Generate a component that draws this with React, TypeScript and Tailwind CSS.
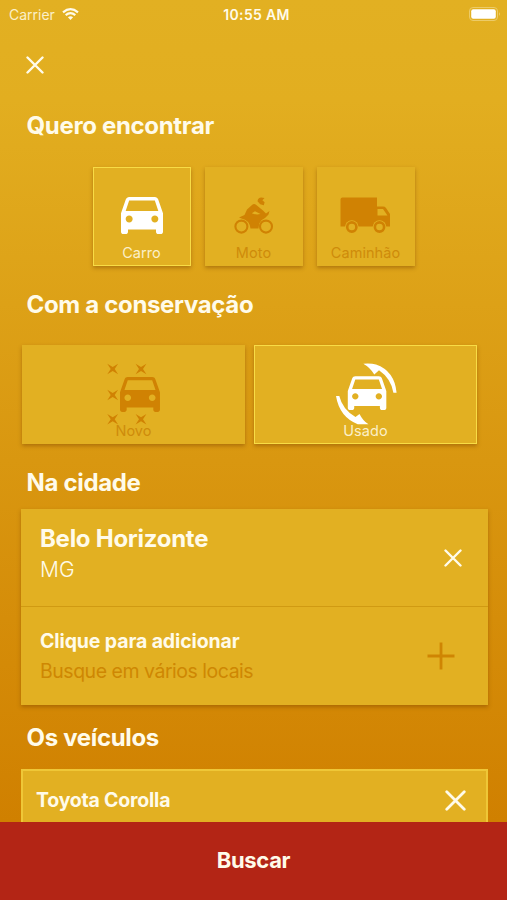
import type { ReactNode } from "react";
import clsx from "clsx";

const CAR_PATH =
  "M18.92 6.01C18.72 5.42 18.16 5 17.5 5h-11c-.66 0-1.21.42-1.42 1.01L3 12v8c0 .55.45 1 1 1h1c.55 0 1-.45 1-1v-1h12v1c0 .55.45 1 1 1h1c.55 0 1-.45 1-1v-8l-2.08-5.99zM6.5 16c-.83 0-1.5-.67-1.5-1.5S5.67 13 6.5 13s1.5.67 1.5 1.5S7.33 16 6.5 16zm11 0c-.83 0-1.5-.67-1.5-1.5s.67-1.5 1.5-1.5 1.5.67 1.5 1.5-.67 1.5-1.5 1.5zM5 11l1.5-4.5h11L19 11H5z";

function CarIcon() {
  return (
    <svg width="42" height="37" viewBox="3 5 18 16" preserveAspectRatio="none" fill="currentColor">
      <path d={CAR_PATH} />
    </svg>
  );
}

function MotoIcon() {
  return (
    <svg width="40" height="37" viewBox="0 0 40 37" fill="currentColor">
      <circle cx="7.4" cy="29.6" r="6" fill="none" stroke="currentColor" strokeWidth="2.1" />
      <circle cx="32" cy="29.6" r="6" fill="none" stroke="currentColor" strokeWidth="2.1" />
      <path d="M5 20.5 10.5 18 13 12.5 18 8Q20 6 22.3 8L29 13.5 32 16.5 35.5 14 34.5 17.5 31 21Q27 22.5 25.2 26.5L24.5 31.5H16.5Q15.5 23 7.5 21.5Z" />
      <path d="M17.8 16.2 21 14.2 26.5 17Q22 18.2 17.8 16.2Z" fill="#e2b022" />
      <path d="M23.5 4.2Q24 .8 27.2.6L30.5 1 28.4 3.2 30.6 5.3 29.8 8.2 26.2 7.2Z" />
    </svg>
  );
}

function TruckIcon() {
  return (
    <svg width="51" height="37" viewBox="0 0 51 37" fill="currentColor">
      <path d="M2.5.5H37v9h6q2 0 3 1.4L50 17v12.5H.5v-27q0-2 2-2z" />
      <path d="M37.5 12h5.5l4.5 6.5h-10z" fill="#e2b022" />
      <circle cx="11.8" cy="30" r="6.8" fill="#e2b022" />
      <circle cx="39.5" cy="30" r="6.8" fill="#e2b022" />
      <circle cx="11.8" cy="30" r="4.6" fill="none" stroke="currentColor" strokeWidth="2.6" />
      <circle cx="39.5" cy="30" r="4.6" fill="none" stroke="currentColor" strokeWidth="2.6" />
    </svg>
  );
}

function NewCarIcon() {
  const sparks = [
    [5.7, 6],
    [34, 6],
    [5.7, 32],
    [5.7, 56.3],
    [34, 56.3],
  ];
  return (
    <svg width="54" height="62" viewBox="0 0 54 62" fill="currentColor">
      {sparks.map(([x, y]) => (
        <path
          key={`${x}-${y}`}
          transform={`translate(${x} ${y})`}
          d="M-5.4-5.2 0-2 5.4-5.2 2 0 5.4 5.2 0 2-5.4 5.2-2 0Z"
        />
      ))}
      <path transform="translate(13 14) scale(2.22 2.18) translate(-3 -5)" d={CAR_PATH} />
    </svg>
  );
}

function UsedCarIcon() {
  return (
    <svg width="62" height="62" viewBox="0 0 62 62" fill="currentColor">
      <path d="M28.3.8Q36 .2 41 1.6 59.5 8 61.6 29.8H58.4Q56 15.5 44 7.3L39.3 11.5Q35 4.5 28.3.8Z" />
      <path d="M1 33H4.3Q7.5 46.5 20.5 54L24.5 51Q28 58 33.5 61.3L22.7 61.2Q4.5 54 1 33Z" />
      <path transform="translate(12.8 13.2) scale(2.14 2.12) translate(-3 -5)" d={CAR_PATH} />
    </svg>
  );
}

function CloseIcon({ size }: { size: number }) {
  return (
    <svg width={size} height={size} viewBox="0 0 18 18" fill="none" stroke="#fffbea" strokeWidth="2.4" strokeLinecap="round">
      <path d="M1.5 1.5 16.5 16.5M16.5 1.5 1.5 16.5" />
    </svg>
  );
}

type OptionProps = {
  label: string;
  icon: ReactNode;
  selected?: boolean;
  className?: string;
};

function Option({ label, icon, selected, className }: OptionProps) {
  return (
    <button
      className={clsx(
        "flex flex-col items-center justify-end bg-[#e2b022] pb-[3px] shadow-[0_2px_4px_rgba(120,65,0,0.45)]",
        selected ? "border border-[#f8dc45] text-white" : "border border-transparent text-[#d08203]",
        className,
      )}
    >
      {icon}
      <span className={clsx("text-[14.5px] leading-[18px] tracking-[0.05px]", selected ? "text-[#fbefc8]" : "text-[#ce8b0b]")}>
        {label}
      </span>
    </button>
  );
}

function Heading({ children }: { children: ReactNode }) {
  return <h2 className="pl-[26.5px] text-[24px] leading-[30px] font-bold tracking-[-0.33px]">{children}</h2>;
}

export default function App() {
  return (
    <div className="flex h-[900px] w-[507px] flex-col overflow-hidden bg-[linear-gradient(#e2b022_0px,#e2ae20_100px,#d08000_822px)] font-['Inter',sans-serif] text-[#fffbea]">
      <header className="grid h-7 shrink-0 grid-cols-3 items-center pr-[6px] pl-[9px] text-[14px]">
        <div className="flex items-center gap-[7px] text-[#fbefc8]">
          <span>Carrier</span>
          <svg width="17" height="12" viewBox="0 0 17 12" fill="none" stroke="#fffbea" strokeWidth="2.2">
            <path d="M1 4.3Q8.5-2 16 4.3M3.7 7.2Q8.5 3.2 13.3 7.2" />
            <path d="M5.9 9.3Q8.5 7.2 11.1 9.3L8.5 12Z" fill="#fffbea" stroke="none" />
          </svg>
        </div>
        <span className="pl-[3px] text-center font-semibold tracking-[0.3px]">10:55 AM</span>
        <svg className="justify-self-end" width="32" height="14" viewBox="0 0 32 14">
          <rect x=".5" y=".5" width="28" height="13" rx="3.5" fill="none" stroke="#eccb68" />
          <rect x="2.2" y="2.2" width="24.6" height="9.6" rx="2" fill="#fff" />
          <path d="M30 5Q31.6 7 30 9Z" fill="#f2d98a" />
        </svg>
      </header>

      <main className="h-[794px] shrink-0 overflow-hidden">
        <button className="mt-[28px] ml-[26px] block">
          <CloseIcon size={18} />
        </button>

        <div className="mt-[37px]">
          <Heading>Quero encontrar</Heading>
        </div>
        <div className="mt-[26px] flex justify-center gap-[14px]">
          <Option label="Carro" icon={<div className="mb-[10px]"><CarIcon /></div>} selected className="h-[99px] w-[98px]" />
          <Option label="Moto" icon={<div className="mb-[10px]"><MotoIcon /></div>} className="h-[99px] w-[98px]" />
          <Option label="Caminhão" icon={<div className="mb-[10px]"><TruckIcon /></div>} className="h-[99px] w-[98px]" />
        </div>

        <div className="mt-[24px]">
          <Heading>Com a conservação</Heading>
        </div>
        <div className="mt-[25px] flex gap-[9px] pl-[22px]">
          <Option label="Novo" icon={<div className="mb-[-3px]"><NewCarIcon /></div>} className="h-[99px] w-[223px]" />
          <Option label="Usado" icon={<div className="mb-[-3px]"><UsedCarIcon /></div>} selected className="h-[99px] w-[223px]" />
        </div>

        <div className="mt-[24px]">
          <Heading>Na cidade</Heading>
        </div>
        <div className="mt-[11px] ml-[21px] w-[467px] bg-[#e2b022] shadow-[0_2px_4px_rgba(120,65,0,0.45)]">
          <div className="flex h-[98px] items-center justify-between border-b border-[#d09a12] pr-[26px] pl-[19px]">
            <div className="pb-[8px]">
              <p className="text-[24px] leading-[32px] font-bold tracking-[-0.27px]">Belo Horizonte</p>
              <p className="text-[21px] leading-[30px] font-light">MG</p>
            </div>
            <CloseIcon size={18} />
          </div>
          <div className="flex h-[98px] items-center justify-between pr-[33px] pl-[19px]">
            <div>
              <p className="text-[19.5px] leading-[30px] font-bold tracking-[-0.12px]">Clique para adicionar</p>
              <p className="text-[19.5px] leading-[30px] tracking-[-0.48px] text-[#ce8703]">Busque em vários locais</p>
            </div>
            <svg width="28" height="28" viewBox="0 0 28 28" stroke="#cf8503" strokeWidth="2.8">
              <path d="M14 .5v27M.5 14h27" />
            </svg>
          </div>
        </div>

        <div className="mt-[18px]">
          <Heading>Os veículos</Heading>
        </div>
        <div className="mt-[16px] ml-[21px] flex h-[62px] w-[467px] items-center justify-between border-2 border-[#efc737] bg-[#e2b022] pr-[20px] pl-[13px]">
          <span className="pt-[2px] text-[19.5px] font-bold tracking-[-0.22px]">Toyota Corolla</span>
          <CloseIcon size={21} />
        </div>
      </main>

      <button className="h-[78px] shrink-0 bg-[#b32515] pb-[2px] text-[22px] font-bold tracking-[-0.35px]">Buscar</button>
    </div>
  );
}
